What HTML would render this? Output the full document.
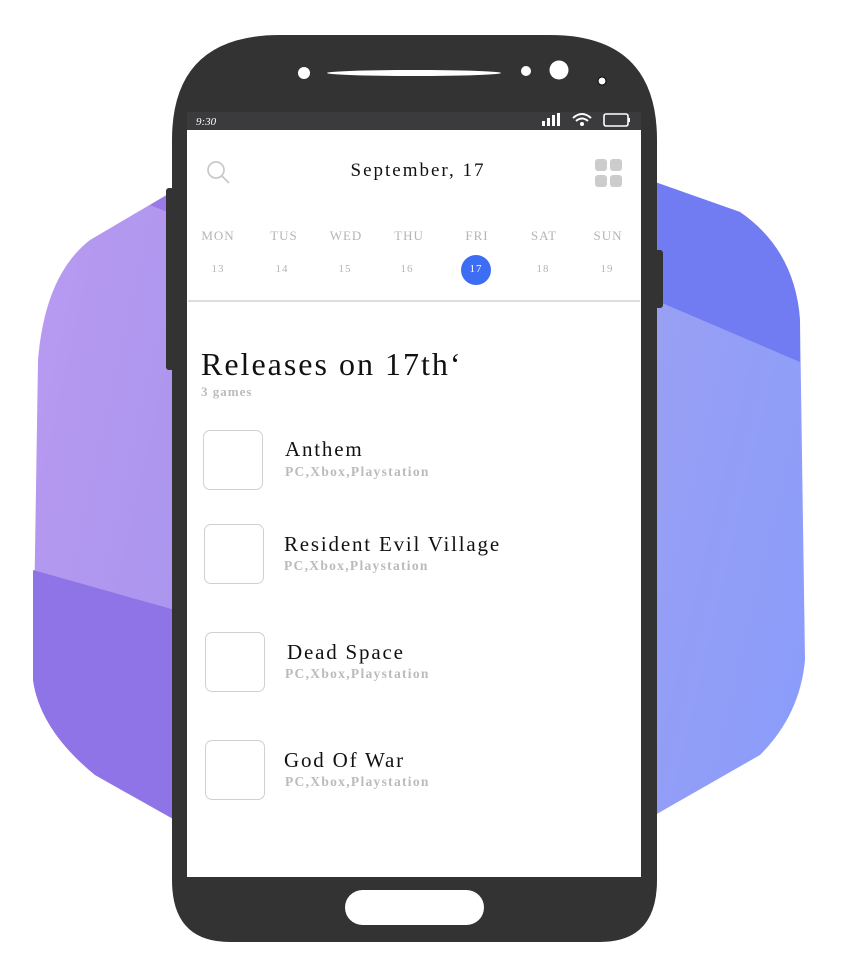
<!DOCTYPE html>
<html><head><meta charset="utf-8"><style>
body{margin:0;width:842px;height:968px;background:#fff;position:relative;overflow:hidden;font-family:"Liberation Serif",serif}
.abs{position:absolute}
.day{position:absolute;top:228px;width:60px;text-align:center;font-size:13px;color:#b5b5b5;letter-spacing:1px}
.num{position:absolute;top:263px;width:60px;text-align:center;font-size:11px;color:#b5b5b5;letter-spacing:1px}
.box{position:absolute;width:58px;height:58px;border:1.5px solid #d0d0d0;border-radius:7px;background:#fff}
.t{position:absolute;font-size:21px;color:#111;letter-spacing:1.8px}
.s{position:absolute;font-size:13.5px;color:#bbb;letter-spacing:1.3px;font-weight:bold}
</style></head><body>
<svg class="abs" style="left:0;top:0" width="842" height="968">
<defs>
<linearGradient id="gl" x1="0" y1="0" x2="1" y2="1"><stop offset="0" stop-color="#b99af0"/><stop offset="1" stop-color="#a894ee"/></linearGradient>
<linearGradient id="gr" x1="0" y1="0" x2="1" y2="1"><stop offset="0" stop-color="#9aa0f2"/><stop offset="1" stop-color="#8a9cfb"/></linearGradient>
</defs>
<path d="M175 190 L90 240 Q45 275 38 360 L33 680 Q40 730 95 775 L175 820 Z" fill="url(#gl)"/>
<path d="M33 570 L175 610 L175 820 L95 775 Q40 730 33 680 Z" fill="#8f74e8"/>
<path d="M175 190 L150 205 L175 215 Z" fill="#9a7ae8"/>
<path d="M655 182 L740 212 Q795 250 800 320 L805 660 Q800 715 760 755 L655 815 Z" fill="url(#gr)"/>
<path d="M655 182 L740 212 Q795 250 800 320 L800 362 L655 300 Z" fill="#727cf2"/>
<rect x="166" y="188" width="8" height="182" rx="3" fill="#333"/>
<rect x="654" y="250" width="9" height="58" rx="3" fill="#333"/>
<path d="M172 140 Q172 35 280 35 L550 35 Q657 35 657 140 L657 880 Q657 942 600 942 L230 942 Q172 942 172 880 Z" fill="#333"/>
<rect x="187" y="112" width="454" height="765" fill="#fff"/>
<rect x="187" y="112" width="454" height="18" fill="#3b3b3d"/>
<rect x="345" y="890" width="139" height="35" rx="17.5" fill="#fff"/>
<circle cx="304" cy="73" r="6" fill="#fff"/>
<ellipse cx="414" cy="73" rx="87" ry="3" fill="#fff"/>
<circle cx="526" cy="71" r="5" fill="#fff"/>
<circle cx="559" cy="70" r="9.5" fill="#fff"/>
<circle cx="602" cy="81" r="4" fill="#fff" stroke="#000" stroke-width="1"/>
<text x="196" y="125" font-size="11" fill="#fff" font-style="italic" font-family="Liberation Serif">9:30</text>
<rect x="542" y="121" width="3" height="5" fill="#fff"/><rect x="547" y="118" width="3" height="8" fill="#fff"/><rect x="552" y="115" width="3" height="11" fill="#fff"/><rect x="557" y="113" width="3" height="13" fill="#fff"/>
<path d="M573 118 Q582 110 591 118 M576 121 Q582 116 588 121" stroke="#fff" stroke-width="2" fill="none"/><circle cx="582" cy="124" r="2" fill="#fff"/>
<rect x="604" y="114" width="24" height="12" rx="2" fill="none" stroke="#fff" stroke-width="1.6"/><rect x="628" y="118" width="2" height="4" fill="#fff"/>
<circle cx="216" cy="170" r="8" fill="none" stroke="#c8c8c8" stroke-width="1.7"/><line x1="222" y1="176" x2="229" y2="183" stroke="#c8c8c8" stroke-width="1.7"/>
<rect x="595" y="159" width="12" height="12" rx="3" fill="#ccc"/><rect x="610" y="159" width="12" height="12" rx="3" fill="#ccc"/>
<rect x="595" y="175" width="12" height="12" rx="3" fill="#ccc"/><rect x="610" y="175" width="12" height="12" rx="3" fill="#ccc"/>
<circle cx="476" cy="270" r="15" fill="#3d6cf5"/>
<line x1="188" y1="301" x2="640" y2="301" stroke="#ddd" stroke-width="2"/>
</svg>
<div class="abs" style="left:300px;top:160px;width:236px;text-align:center;font-size:19px;letter-spacing:2px;color:#111">September, 17</div>
<div class="day" style="left:188px">MON</div><div class="day" style="left:254px">TUS</div><div class="day" style="left:316px">WED</div><div class="day" style="left:379px">THU</div><div class="day" style="left:447px">FRI</div><div class="day" style="left:514px">SAT</div><div class="day" style="left:578px">SUN</div>
<div class="num" style="left:188px">13</div><div class="num" style="left:252px">14</div><div class="num" style="left:315px">15</div><div class="num" style="left:377px">16</div><div class="num" style="left:446px;color:#fff">17</div><div class="num" style="left:513px">18</div><div class="num" style="left:577px">19</div>
<div class="abs" style="left:201px;top:346px;font-size:32px;letter-spacing:2px;color:#111">Releases on 17th‘</div>
<div class="abs" style="left:201px;top:384px;font-size:13px;letter-spacing:1px;color:#bbb;font-weight:bold">3 games</div>
<div class="box" style="left:203px;top:430px"></div><div class="t" style="left:285px;top:437px">Anthem</div><div class="s" style="left:285px;top:464px">PC,Xbox,Playstation</div>
<div class="box" style="left:204px;top:524px"></div><div class="t" style="left:284px;top:532px">Resident Evil Village</div><div class="s" style="left:284px;top:558px">PC,Xbox,Playstation</div>
<div class="box" style="left:205px;top:632px"></div><div class="t" style="left:287px;top:640px">Dead Space</div><div class="s" style="left:285px;top:666px">PC,Xbox,Playstation</div>
<div class="box" style="left:205px;top:740px"></div><div class="t" style="left:284px;top:748px">God Of War</div><div class="s" style="left:285px;top:774px">PC,Xbox,Playstation</div>
</body></html>
